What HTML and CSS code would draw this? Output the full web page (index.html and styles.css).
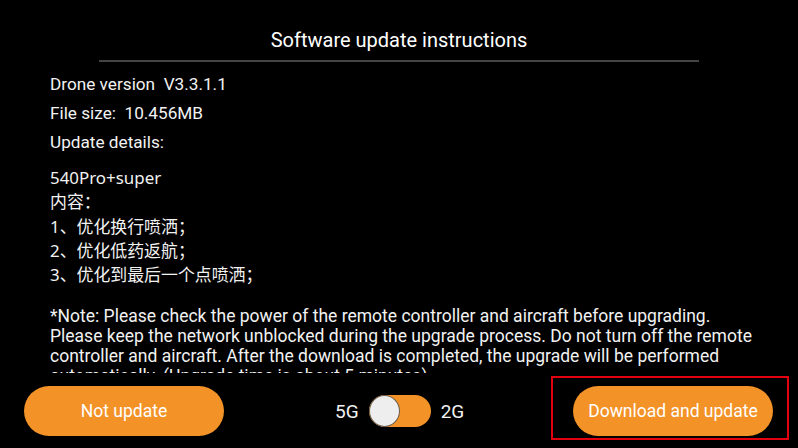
FILE: index.html
```html
<!DOCTYPE html>
<html lang="en">

<head>
    <meta charset="UTF-8">
    <meta name="viewport" content="width=device-width, initial-scale=1.0">
    <title>Software update instructions</title>
    <link rel="stylesheet" href="styles.css">
</head>

<body>
    <div class="dialog">
        <div class="header">
            <h1>Software update instructions</h1>
            <div class="divider"></div>
        </div>

        <div class="content">
            <p class="info">Drone version&nbsp; V3.3.1.1</p>
            <p class="info">File size:&nbsp; 10.456MB</p>
            <p class="info">Update details:</p>

            <div class="details">
                <p>540Pro+super</p>
                <p>内容：</p>
                <p>1、优化换行喷洒；</p>
                <p>2、优化低药返航；</p>
                <p>3、优化到最后一个点喷洒；</p>
            </div>

            <p class="note">*Note: Please check the power of the remote controller and aircraft before upgrading.
                Please keep the network unblocked during the upgrade process. Do not turn off the remote
                controller and aircraft. After the download is completed, the upgrade will be performed
                automatically. (Upgrade time is about 5 minutes)</p>
        </div>

        <div class="footer">
            <button class="btn">Not update</button>
            <div class="network">
                <span>5G</span>
                <div class="switch">
                    <div class="knob"></div>
                </div>
                <span>2G</span>
            </div>
            <div class="highlight">
                <button class="btn">Download and update</button>
            </div>
        </div>
    </div>
</body>

</html>
```

FILE: styles.css
```css
* {
    box-sizing: border-box;
    margin: 0;
    padding: 0;
}

body {
    font-family: Roboto, 'Noto Sans CJK SC', sans-serif;
    background: #000;
    color: #f2f2f2;
    width: 798px;
    height: 448px;
    overflow: hidden;
}

.dialog {
    height: 448px;
    display: flex;
    flex-direction: column;
}

.header {
    padding-top: 28px;
}

h1 {
    text-align: center;
    font-size: 20px;
    font-weight: 400;
    line-height: 24px;
    color: #fff;
}

.divider {
    margin: 8px 99px 0 99px;
    height: 2px;
    background: #444;
}

.content {
    flex: 1;
    overflow: hidden;
    padding: 8px 0 0 50px;
}

.info {
    font-size: 17.2px;
    line-height: 29px;
}

.details {
    margin-top: 9px;
    font-family: 'Noto Sans', 'Noto Sans CJK SC', sans-serif;
    font-size: 16.9px;
    line-height: 24.3px;
}

.note {
    width: 712px;
    margin-top: 19px;
    font-size: 17.5px;
    line-height: 20px;
}

.footer {
    height: 75px;
    display: flex;
    align-items: flex-start;
    padding: 0 9px 0 24px;
}

.btn {
    width: 200px;
    height: 50px;
    border: none;
    border-radius: 25px;
    background: #f39226;
    color: #fff;
    font-family: Roboto, sans-serif;
    font-size: 17.5px;
}

.footer > .btn {
    margin-top: 13px;
}

.network {
    margin-top: 13px;
    margin-left: 111px;
    height: 50px;
    display: flex;
    align-items: center;
    gap: 10px;
    font-size: 19px;
}

.switch {
    width: 62px;
    height: 32px;
    border-radius: 16px;
    background: #f39226;
}

.knob {
    width: 31px;
    height: 32px;
    border-radius: 50%;
    background: #eee;
    border: 1px solid #6b5a48;
}

.highlight {
    margin-top: 3px;
    margin-left: auto;
    width: 238px;
    height: 64px;
    border: 2px solid #e3000f;
    padding: 8px 0 0 20px;
}
```
